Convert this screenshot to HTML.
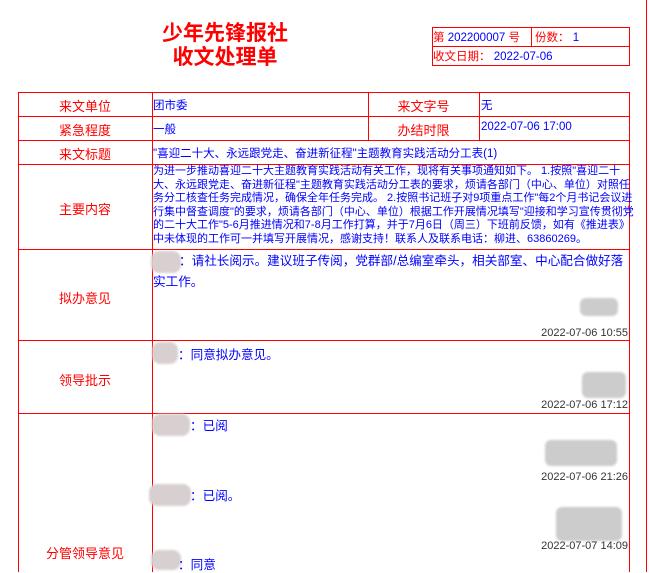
<!DOCTYPE html>
<html><head><meta charset="utf-8"><style>
body{margin:0;width:649px;height:572px;overflow:hidden;background:#fff;font-family:"Liberation Sans","Noto Sans CJK SC",sans-serif;position:relative}
.a{position:absolute;white-space:nowrap}
.h{position:absolute;background:#f00;height:1px}
.v{position:absolute;background:#f00;width:1px}
.lab{position:absolute;color:#f00;font-size:13px;text-align:center;width:134px;left:18px}
.b{color:#00f}
.blur{position:absolute;background:#d8d0d0;border-radius:8px;filter:blur(1px)}
.g{position:absolute;background:#ccc;border-radius:6px;filter:blur(1px)}
.t{position:absolute;right:21px;font-size:11px;color:#333}
</style></head><body>
<div class="a" style="left:160px;top:22px;color:#f00;font-weight:bold;font-size:21px;line-height:24px;text-align:center;width:130px">少年先锋报社<br>收文处理单</div>
<div class="h" style="left:432px;top:27px;width:198px"></div>
<div class="h" style="left:432px;top:46px;width:198px"></div>
<div class="h" style="left:432px;top:65px;width:198px"></div>
<div class="v" style="left:432px;top:27px;height:39px"></div>
<div class="v" style="left:531px;top:27px;height:19px"></div>
<div class="v" style="left:629px;top:27px;height:39px"></div>
<div class="a" style="left:433px;top:29px;font-size:11.5px;color:#f00">第 <span class="b">202200007</span> 号</div>
<div class="a" style="left:535px;top:29px;font-size:11.5px;color:#f00">份数： <span class="b">1</span></div>
<div class="a" style="left:433px;top:48px;font-size:11.5px;color:#f00">收文日期： <span class="b">2022-07-06</span></div>
<div class="v" style="left:646px;top:0;height:572px"></div>
<div class="h" style="left:18px;top:92px;width:612px"></div>
<div class="h" style="left:18px;top:116px;width:612px"></div>
<div class="h" style="left:18px;top:140px;width:612px"></div>
<div class="h" style="left:18px;top:164px;width:612px"></div>
<div class="h" style="left:18px;top:249px;width:612px"></div>
<div class="h" style="left:18px;top:340px;width:612px"></div>
<div class="h" style="left:18px;top:413px;width:612px"></div>
<div class="v" style="left:18px;top:92px;height:480px"></div>
<div class="v" style="left:152px;top:92px;height:480px"></div>
<div class="v" style="left:368px;top:92px;height:48px"></div>
<div class="v" style="left:479px;top:92px;height:48px"></div>
<div class="v" style="left:629px;top:92px;height:480px"></div>
<div class="lab" style="top:96px">来文单位</div>
<div class="lab" style="top:120px">紧急程度</div>
<div class="lab" style="top:144px">来文标题</div>
<div class="lab" style="top:199px">主要内容</div>
<div class="lab" style="top:288px">拟办意见</div>
<div class="lab" style="top:370px">领导批示</div>
<div class="lab" style="top:543px">分管领导意见</div>
<div class="lab" style="top:96px;left:368px;width:111px">来文字号</div>
<div class="lab" style="top:120px;left:368px;width:111px">办结时限</div>
<div class="a b" style="left:153px;top:97px;font-size:11.5px">团市委</div>
<div class="a b" style="left:481px;top:97px;font-size:11.5px">无</div>
<div class="a b" style="left:153px;top:121px;font-size:11.5px">一般</div>
<div class="a b" style="left:481px;top:121px;font-size:11.5px">2022-07-06 17:00</div>
<div class="a b" style="left:153px;top:145px;font-size:11.5px">"喜迎二十大、永远跟党走、奋进新征程"主题教育实践活动分工表(1)</div>
<div class="a b" style="left:153px;top:165px;font-size:11px;line-height:13.6px">为进一步推动喜迎二十大主题教育实践活动有关工作，现将有关事项通知如下。 1.按照"喜迎二十<br>大、永远跟党走、奋进新征程"主题教育实践活动分工表的要求，烦请各部门（中心、单位）对照任<br>务分工核查任务完成情况，确保全年任务完成。 2.按照书记班子对9项重点工作"每2个月书记会议进<br>行集中督查调度"的要求，烦请各部门（中心、单位）根据工作开展情况填写"迎接和学习宣传贯彻党<br>的二十大工作"5-6月推进情况和7-8月工作打算，并于7月6日（周三）下班前反馈，如有《推进表》<br>中未体现的工作可一并填写开展情况，感谢支持！联系人及联系电话：柳进、63860269。</div>
<div class="blur" style="left:151px;top:251px;width:30px;height:22px"></div>
<div class="a b" style="left:153px;top:251px;font-size:12.6px;line-height:21px"><span style="display:inline-block;width:26px"></span>：请社长阅示。建议班子传阅，党群部/总编室牵头，相关部室、中心配合做好落<br>实工作。</div>
<div class="g" style="left:580px;top:298px;width:38px;height:18px"></div>
<div class="t" style="top:327px">2022-07-06 10:55</div>
<div class="blur" style="left:152px;top:342px;width:26px;height:22px"></div>
<div class="a b" style="left:178px;top:344px;font-size:12.6px">：同意拟办意见。</div>
<div class="g" style="left:582px;top:372px;width:44px;height:26px"></div>
<div class="t" style="top:399px">2022-07-06 17:12</div>
<div class="blur" style="left:152px;top:414px;width:38px;height:22px"></div>
<div class="a b" style="left:190px;top:415px;font-size:12.6px">：已阅</div>
<div class="g" style="left:545px;top:440px;width:72px;height:26px"></div>
<div class="t" style="top:471px">2022-07-06 21:26</div>
<div class="blur" style="left:149px;top:484px;width:42px;height:22px"></div>
<div class="a b" style="left:190px;top:485px;font-size:12.6px">：已阅。</div>
<div class="g" style="left:556px;top:507px;width:66px;height:34px"></div>
<div class="t" style="top:540px">2022-07-07 14:09</div>
<div class="blur" style="left:151px;top:550px;width:30px;height:20px"></div>
<div class="a b" style="left:178px;top:554px;font-size:12.6px">：同意</div>
</body></html>
